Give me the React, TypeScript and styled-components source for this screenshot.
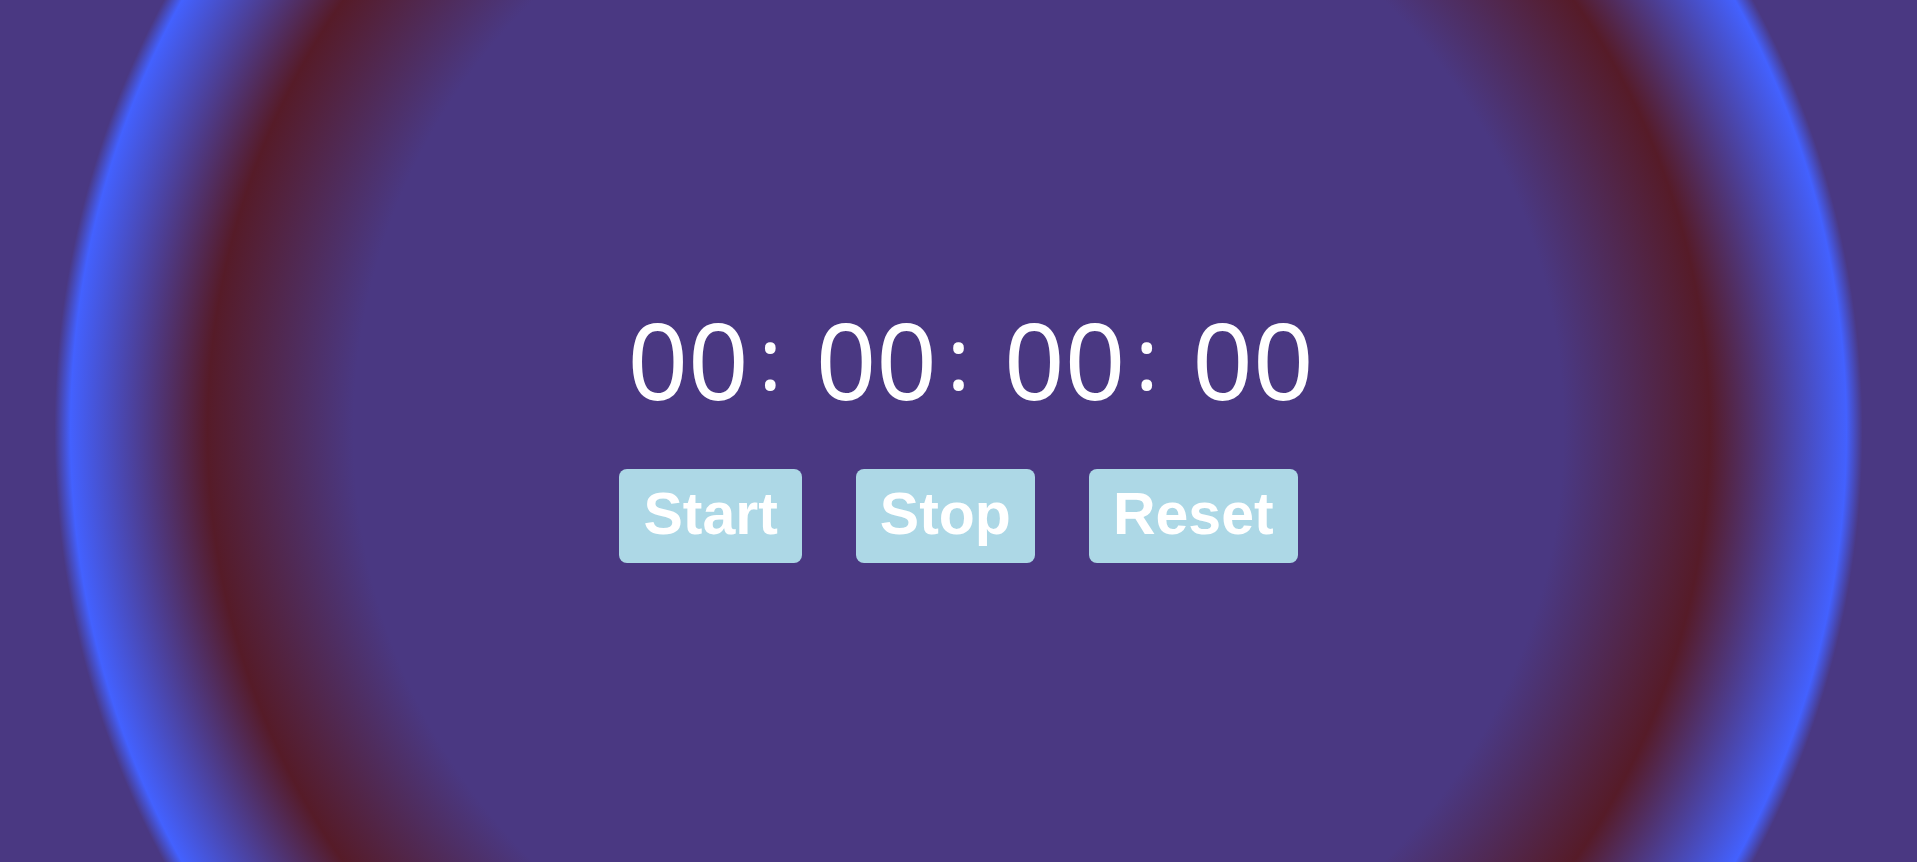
import React from "react";
import styled, { createGlobalStyle } from "styled-components";

const GlobalStyle = createGlobalStyle`
    html, body {
        margin: 0;
        padding: 0;
        height: 100%;
    }
    body {
        background: #4a3882;
    }
`;

const Page = styled.div`
    min-height: 100vh;
    box-sizing: border-box;
    display: flex;
    flex-direction: column;
    align-items: center;
    justify-content: center;
    gap: 57px;
    padding-top: 6px;
    background: radial-gradient(
        circle at 50% 50%,
        #4a3882 0px,
        #4a3882 605px,
        #561b28 751px,
        #4361ff 888px,
        #4a3882 904px
    );
`;

const TimerDisplay = styled.div`
    color: #ffffff;
    font-family: "Noto Sans", "Open Sans", "Liberation Sans", sans-serif;
    font-size: 106px;
    line-height: 1;
    height: 106px;
    padding-left: 24px;
    white-space: nowrap;
`;

const TimeUnit = styled.span`
    display: inline-block;
`;

const Separator = styled.span`
    display: inline-block;
    font-size: 86px;
    vertical-align: 10px;
    margin-left: 10px;
    margin-right: 34px;
`;

const Controls = styled.div`
    display: flex;
    gap: 54px;
`;

const ControlButton = styled.button`
    background: #add8e6;
    color: #ffffff;
    border: none;
    border-radius: 8px;
    font-family: "Liberation Sans", Arial, sans-serif;
    font-weight: 700;
    font-size: 59px;
    line-height: 66px;
    padding: 12px 24px 16px;
    cursor: pointer;
`;

export default function App() {
    const units = ["00", "00", "00", "00"];
    return (
        <>
            <GlobalStyle />
            <Page>
                <TimerDisplay>
                    {units.map((unit, index) => (
                        <React.Fragment key={index}>
                            <TimeUnit>{unit}</TimeUnit>
                            {index < units.length - 1 && <Separator>:</Separator>}
                        </React.Fragment>
                    ))}
                </TimerDisplay>
                <Controls>
                    <ControlButton>Start</ControlButton>
                    <ControlButton>Stop</ControlButton>
                    <ControlButton>Reset</ControlButton>
                </Controls>
            </Page>
        </>
    );
}
